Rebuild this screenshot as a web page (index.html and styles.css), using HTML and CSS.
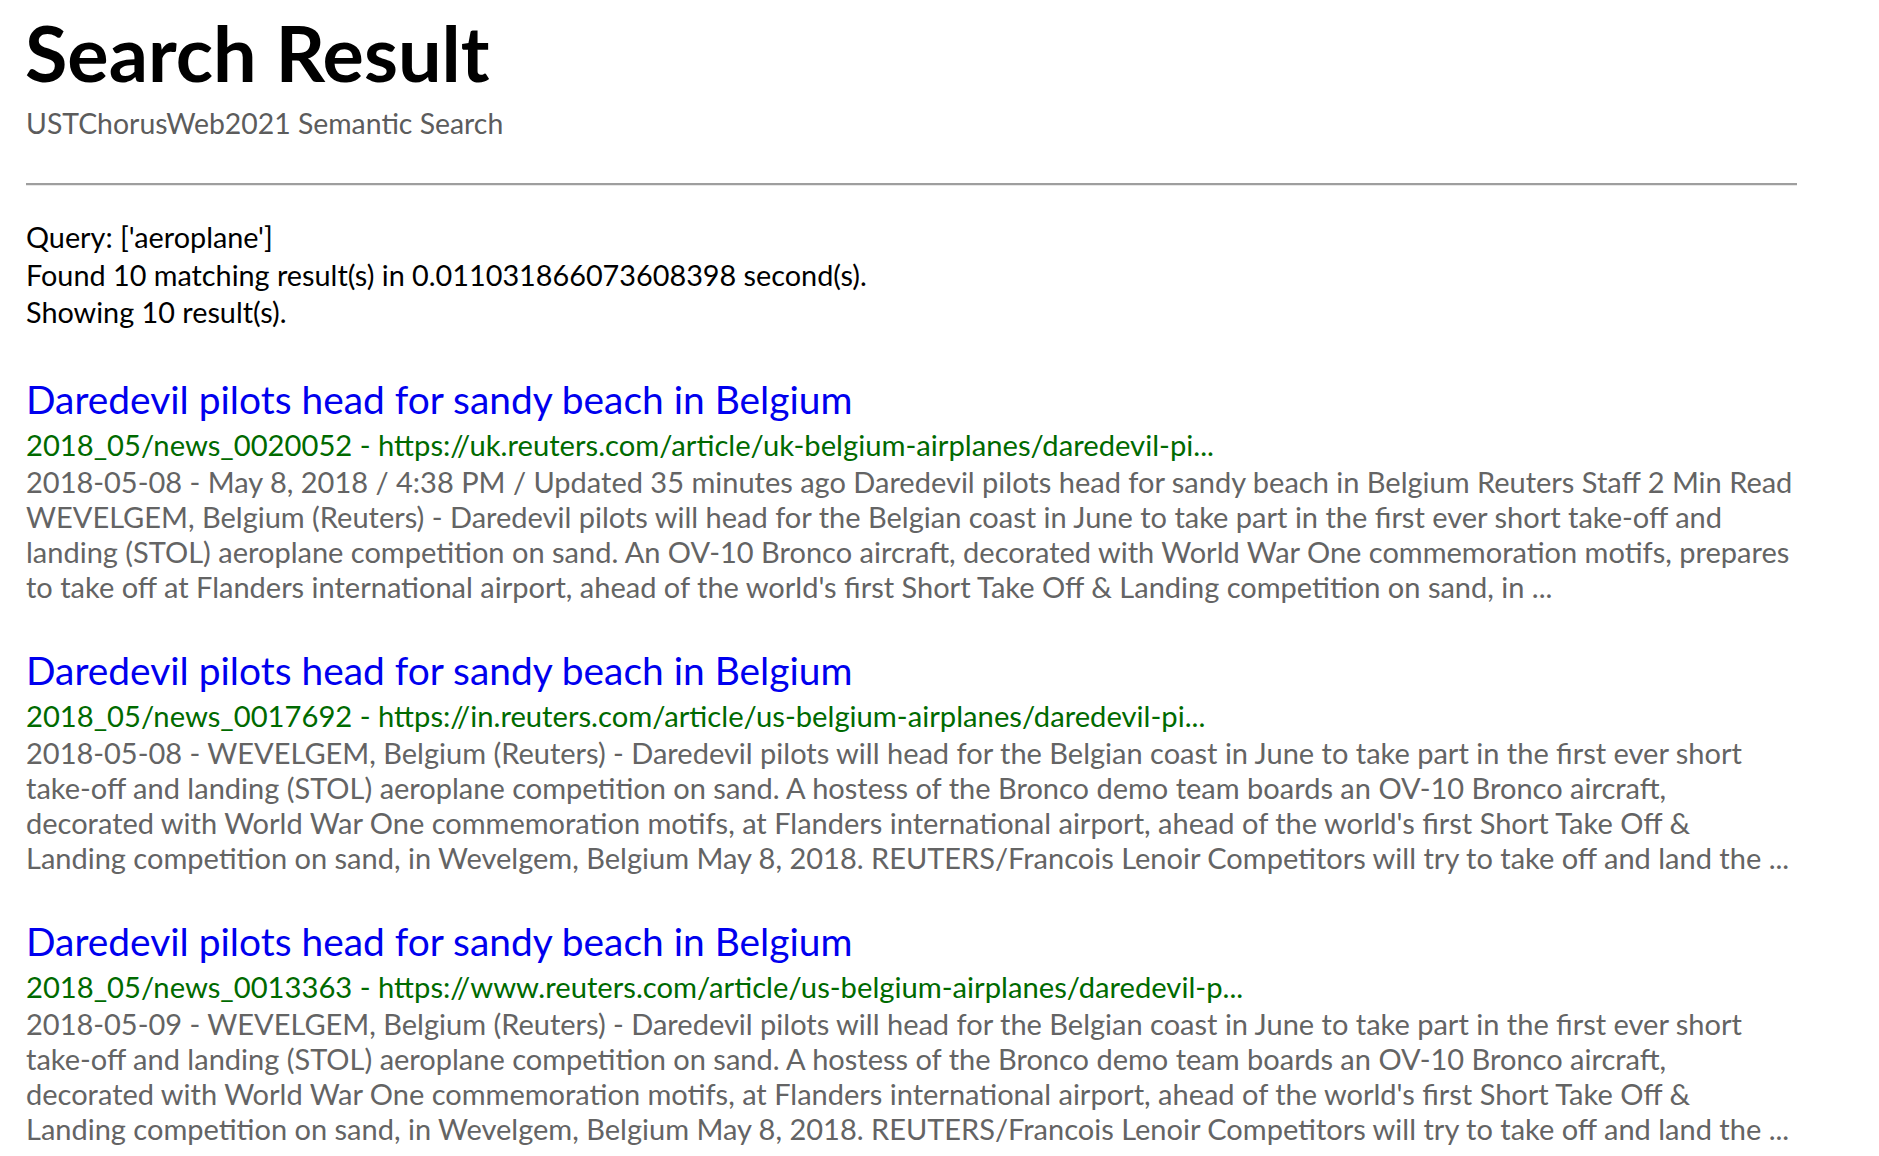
FILE: index.html
```html
<!DOCTYPE html>
<html lang="en">
<head>
<meta charset="utf-8">
<title>Search Result</title>
<link rel="stylesheet" href="styles.css">
</head>
<body>
<div class="page">
  <header class="header">
    <h1 class="title">Search Result</h1>
    <p class="subtitle">USTChorusWeb2021 Semantic Search</p>
  </header>
  <hr class="rule">
  <div class="info">
    <div class="info-line">Query: ['aeroplane']</div>
    <div class="info-line">Found 10 matching result(s) in 0.011031866073608398 second(s).</div>
    <div class="info-line">Showing 10 result(s).</div>
  </div>
  <div class="results">
    <div class="result">
      <a class="result-title" href="#">Daredevil pilots head for sandy beach in Belgium</a>
      <div class="result-url">2018_05/news_0020052 - https://uk.reuters.com/article/uk-belgium-airplanes/daredevil-pi...</div>
      <div class="result-snippet">2018-05-08 - May 8, 2018 / 4:38 PM / Updated 35 minutes ago Daredevil pilots head for sandy beach in Belgium Reuters Staff 2 Min Read<br>WEVELGEM, Belgium (Reuters) - Daredevil pilots will head for the Belgian coast in June to take part in the first ever short take-off and<br>landing (STOL) aeroplane competition on sand. An OV-10 Bronco aircraft, decorated with World War One commemoration motifs, prepares<br>to take off at Flanders international airport, ahead of the world's first Short Take Off &amp; Landing competition on sand, in ...</div>
    </div>
    <div class="result">
      <a class="result-title" href="#">Daredevil pilots head for sandy beach in Belgium</a>
      <div class="result-url">2018_05/news_0017692 - https://in.reuters.com/article/us-belgium-airplanes/daredevil-pi...</div>
      <div class="result-snippet">2018-05-08 - WEVELGEM, Belgium (Reuters) - Daredevil pilots will head for the Belgian coast in June to take part in the first ever short<br>take-off and landing (STOL) aeroplane competition on sand. A hostess of the Bronco demo team boards an OV-10 Bronco aircraft,<br>decorated with World War One commemoration motifs, at Flanders international airport, ahead of the world's first Short Take Off &amp;<br>Landing competition on sand, in Wevelgem, Belgium May 8, 2018. REUTERS/Francois Lenoir Competitors will try to take off and land the ...</div>
    </div>
    <div class="result">
      <a class="result-title" href="#">Daredevil pilots head for sandy beach in Belgium</a>
      <div class="result-url">2018_05/news_0013363 - https://www.reuters.com/article/us-belgium-airplanes/daredevil-p...</div>
      <div class="result-snippet">2018-05-09 - WEVELGEM, Belgium (Reuters) - Daredevil pilots will head for the Belgian coast in June to take part in the first ever short<br>take-off and landing (STOL) aeroplane competition on sand. A hostess of the Bronco demo team boards an OV-10 Bronco aircraft,<br>decorated with World War One commemoration motifs, at Flanders international airport, ahead of the world's first Short Take Off &amp;<br>Landing competition on sand, in Wevelgem, Belgium May 8, 2018. REUTERS/Francois Lenoir Competitors will try to take off and land the ...</div>
    </div>
  </div>
</div>
</body>
</html>
```
FILE: styles.css
```css
html, body {
  margin: 0;
  padding: 0;
  background: #ffffff;
}

body {
  font-family: Lato, "Open Sans", sans-serif;
  color: #000000;
}

.page {
  width: 1771px;
  padding: 0 0 0 26px;
}

.header {
  display: flex;
  flex-direction: column;
}

.title {
  margin: 6px 0 0 -1px;
  font-size: 77.4px;
  font-weight: 700;
  line-height: 92px;
  color: #000;
}

.subtitle {
  margin: 8px 0 0 0;
  font-size: 28.4px;
  line-height: 34px;
  color: #5c5c5c;
}

.rule {
  margin: 43px 0 0 0;
  height: 0;
  border: 0;
  border-top: 2px solid #9e9e9e;
  border-bottom: 1px solid #e8e8e8;
}

.info {
  margin-top: 33px;
  font-size: 28.8px;
  line-height: 37.7px;
}

.results {
  margin-top: 44px;
  display: flex;
  flex-direction: column;
  gap: 43.5px;
}

.result {
  display: flex;
  flex-direction: column;
}

.result-title {
  display: block;
  font-size: 38.9px;
  line-height: 46px;
  margin-bottom: 5px;
  color: #0000ee;
  text-decoration: none;
  white-space: nowrap;
}

.result-url {
  font-size: 29.2px;
  line-height: 35px;
  margin-bottom: 1.5px;
  color: #006a00;
  white-space: nowrap;
}

.result-snippet {
  font-size: 29px;
  line-height: 35px;
  color: #646464;
  white-space: nowrap;
}
```
